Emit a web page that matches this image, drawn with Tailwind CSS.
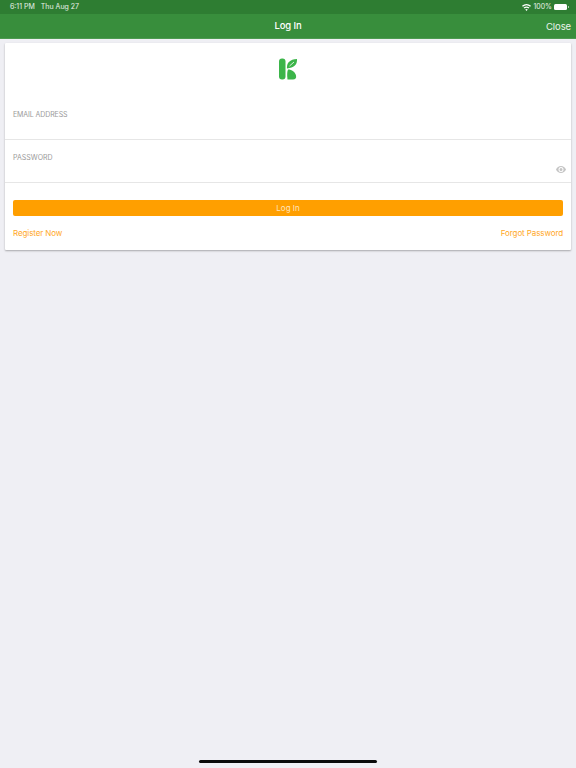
<!DOCTYPE html>
<html>
<head>
<meta charset="utf-8">
<script src="https://cdn.jsdelivr.net/npm/@tailwindcss/browser@4"></script>
</head>
<body class="bg-[#efeff4] font-['Inter','Liberation_Sans',sans-serif]">
<div class="relative w-[576px] h-[768px] overflow-hidden flex flex-col">
  <div class="h-[14px] bg-[#2e7d32] flex items-center justify-between pl-[10px] pr-[9px] text-[7px] text-white/90 shrink-0">
    <div class="flex gap-[6px]"><span>6:11 PM</span><span>Thu Aug 27</span></div>
    <div class="flex items-center gap-[2px] -mr-[2px]">
      <svg width="9" height="7" viewBox="0 0 18 14" fill="white"><path d="M9 14 6.400 10.900a4 4 0 0 1 5.200 0zM4.900 9.200 3.200 7.200a9 9 0 0 1 11.600 0l-1.700 2a6.400 6.400 0 0 0-8.200 0zM1.700 5.400 0 3.400a14 14 0 0 1 18 0l-1.700 2a11.400 11.400 0 0 0-14.600 0z"/></svg>
      <span>100%</span>
      <div class="w-[13px] h-[6px] bg-white rounded-[1.5px]"></div>
      <div class="w-[1px] h-[2px] bg-white/60 -ml-[1px]"></div>
    </div>
  </div>
  <div class="h-[25px] bg-[#388e3c] border-b border-[#4c9a50] flex items-center justify-center relative shrink-0 text-white">
    <span class="text-[9.5px] font-medium tracking-[-0.1px]">Log In</span>
    <span class="absolute right-[5px] top-[6px] text-[9.5px] leading-[14px] tracking-[-0.1px] text-white/90">Close</span>
  </div>
  <div class="mx-[5px] mt-[4px] h-[207px] bg-white shadow-[0_1px_2px_rgba(0,0,0,0.3)] rounded-[1px] flex flex-col">
    <div class="h-[52px] flex justify-center pt-[15px] shrink-0">
      <svg width="18" height="22" viewBox="0 0 18 22" fill="#3cb54a">
        <rect x="0" y="0.500" width="6.500" height="21" rx="3"/>
        <path d="M8.500 21.500C8 17.500 8 14 9 11.500c4 0 7 2.500 8 6 .7 2.500-.8 4-3 4z"/>
        <path d="M8 10.500C7.500 5.500 10 1.500 18 1c.3 5-2 9-10 9.500z"/>
        <path d="M10.500 8 15 4" stroke="white" stroke-width="0.800" fill="none"/>
      </svg>
    </div>
    <div class="pl-[8px] pt-[15px] h-[45px] border-b border-[#e6e6e6] text-[7px] leading-[10px] tracking-[-0.1px] text-[#9a9a9a] shrink-0">EMAIL ADDRESS</div>
    <div class="relative pl-[8px] pt-[13px] h-[43px] border-b border-[#e6e6e6] text-[7px] leading-[10px] text-[#9a9a9a] shrink-0">PASSWORD
      <svg class="absolute right-[5px] top-[26px]" width="10" height="7" viewBox="0 0 20 14" fill="#c4c4c4"><path fill-rule="evenodd" d="M10 0C5.500 0 2 2.800 0 7c2 4.200 5.500 7 10 7s8-2.800 10-7c-2-4.200-5.500-7-10-7zm0 2a5 5 0 1 1 0 10 5 5 0 0 1 0-10zm0 2a3 3 0 1 0 0 6 3 3 0 0 0 0-6z"/></svg>
    </div>
    <div class="mx-[8px] mt-[17px] h-[16px] bg-[#ff9f00] rounded-[2px] flex items-center justify-center text-[8px] text-white/75 shrink-0">Log In</div>
    <div class="mx-[8px] mt-[11px] flex justify-between text-[8px] tracking-[-0.1px] leading-[12px] text-[#ffa726]">
      <span>Register Now</span><span>Forgot Password</span>
    </div>
  </div>
  <div class="absolute left-[199px] top-[760px] w-[178px] h-[3px] rounded-full bg-[#0a0a0a]"></div>
</div>
</body>
</html>
